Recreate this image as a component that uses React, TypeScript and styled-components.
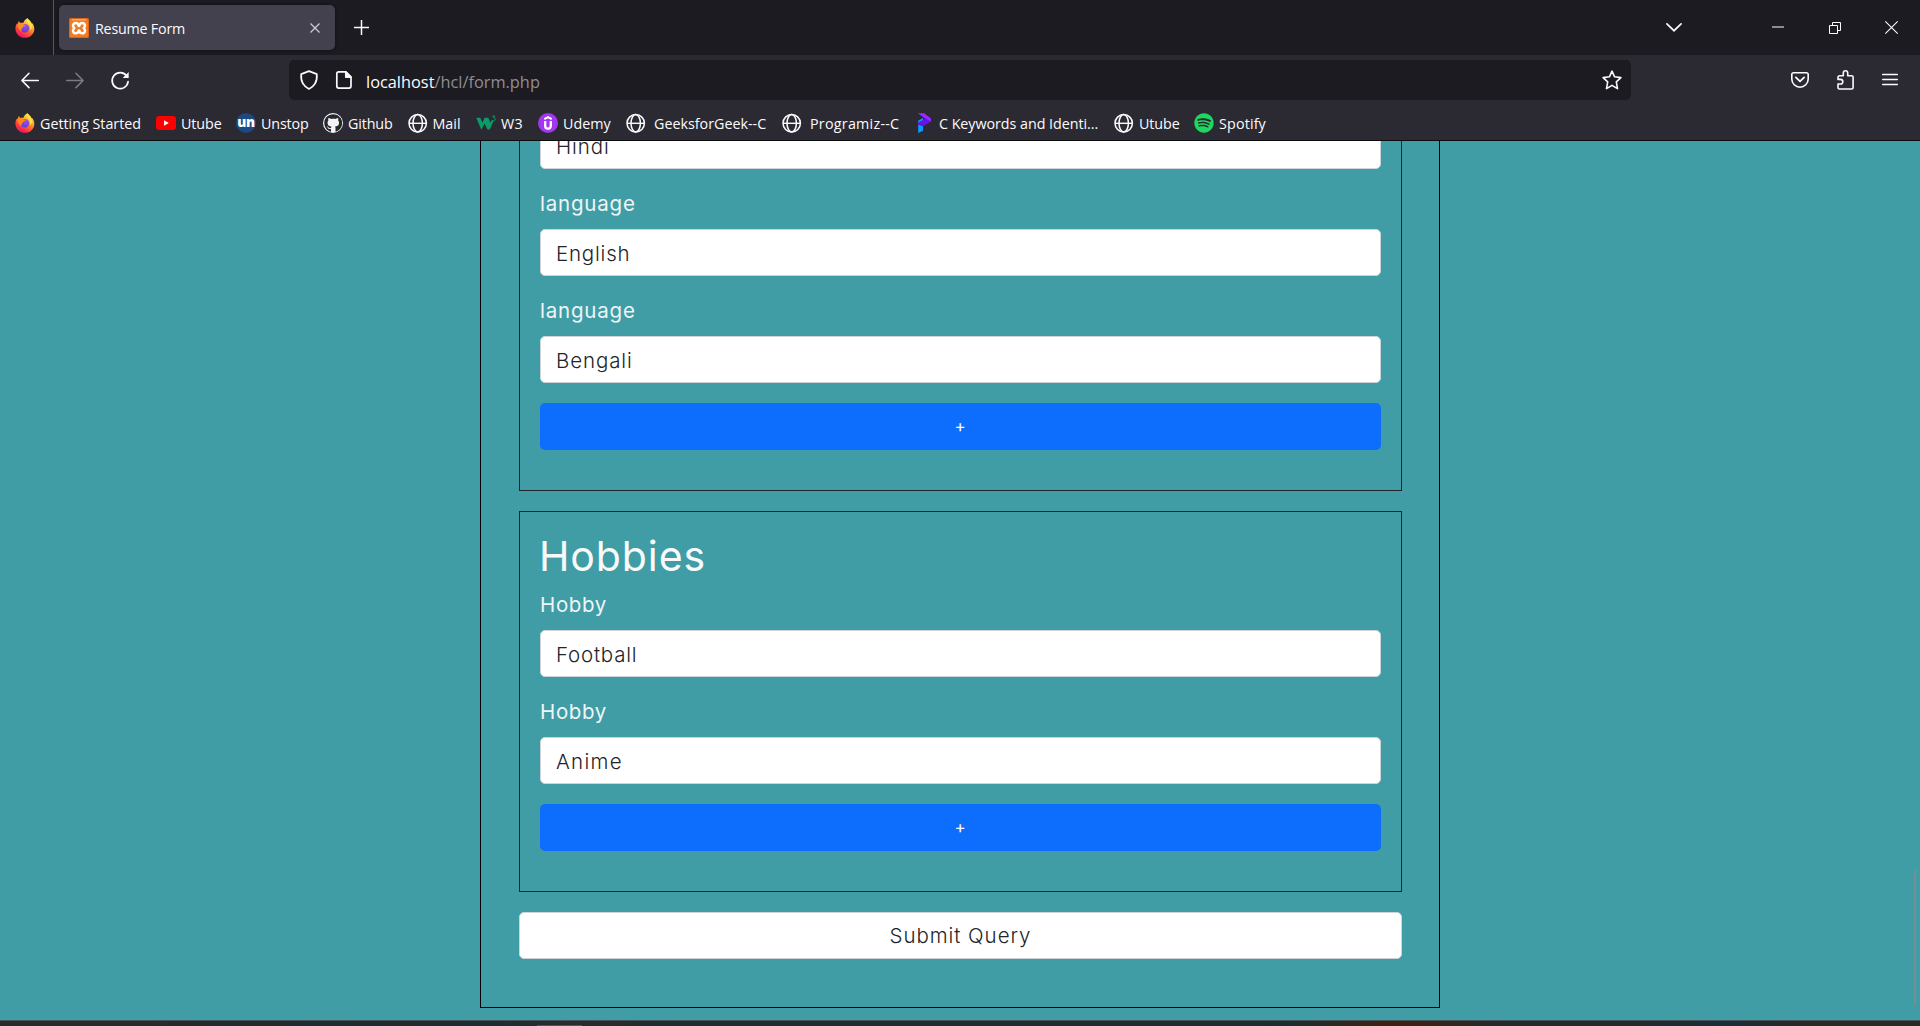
import React from "react";
import styled, { createGlobalStyle } from "styled-components";
import { FaGithub, FaSpotify } from "react-icons/fa";

const GlobalStyle = createGlobalStyle`
  * { box-sizing: border-box; }
  html, body { margin: 0; padding: 0; overflow: hidden; }
  body { background: #1c1b22; }
  button, input { font: inherit; margin: 0; }
`;

const chromeFont = `"Open Sans", "Noto Sans", sans-serif`;
const pageFont = `Inter, "Open Sans", sans-serif`;

/* ---------- window ---------- */

const Window = styled.div`
  display: flex;
  flex-direction: column;
  width: 1920px;
  height: 1026px;
  overflow: hidden;
  font-family: ${chromeFont};
  color: #fbfbfe;
`;

const Icon = styled.svg`
  display: block;
  flex: none;
  overflow: visible;
`;

const IconButton = styled.button<{ $w: number; $dim?: boolean }>`
  display: flex;
  align-items: center;
  justify-content: center;
  flex: none;
  width: ${(p) => p.$w}px;
  height: 40px;
  padding: 0;
  border: 0;
  background: none;
  color: ${(p) => (p.$dim ? "#7b7a81" : "#fbfbfe")};
`;

/* ---------- tab strip ---------- */

const TabStrip = styled.div`
  display: flex;
  align-items: center;
  flex: none;
  height: 55px;
  background: #1c1b22;
`;

const PinnedView = styled.div`
  display: flex;
  align-items: center;
  width: 54px;
  height: 55px;
  padding-left: 15px;
  border-right: 1px solid #58575e;
`;

const Tab = styled.div`
  display: flex;
  align-items: center;
  width: 276px;
  height: 45px;
  margin-left: 5px;
  padding-left: 10px;
  border-radius: 5px;
  background: #42414d;
  box-shadow: 0 0 4px rgba(0, 0, 0, 0.5);
`;

const TabTitle = styled.span`
  flex: 1;
  margin-left: 6px;
  padding-top: 2px;
  font-size: 14.3px;
  letter-spacing: -0.22px;
  line-height: 20px;
  white-space: nowrap;
`;

const WindowControls = styled.div`
  display: flex;
  align-items: center;
  margin-left: auto;
`;

/* ---------- navigation bar ---------- */

const NavBar = styled.div`
  display: flex;
  align-items: center;
  flex: none;
  height: 50px;
  padding-left: 7px;
  background: #2b2a33;
`;

const UrlBar = styled.div`
  display: flex;
  align-items: center;
  width: 1342px;
  height: 40px;
  margin-left: 147px;
  border-radius: 5px;
  background: #1c1b22;
`;

const UrlText = styled.div`
  flex: 1;
  padding: 4px 0 0 7px;
  font-size: 16.35px;
  line-height: 24px;
  white-space: nowrap;
  color: #8f8e94;
`;

const Host = styled.span`
  color: #fbfbfe;
`;

const NavActions = styled.div`
  display: flex;
  align-items: center;
  margin-left: auto;
  padding-right: 9px;
`;

/* ---------- bookmarks ---------- */

const BookmarkBar = styled.div`
  display: flex;
  align-items: center;
  flex: none;
  height: 36px;
  padding: 1px 0 0 15px;
  background: #2b2a33;
  border-bottom: 1px solid #0c0c0d;
`;

const Bookmark = styled.div<{ $w: number; $gap?: number; $track?: number }>`
  display: flex;
  align-items: center;
  flex: none;
  gap: ${(p) => p.$gap ?? 5}px;
  width: ${(p) => p.$w}px;
  font-size: 14.3px;
  letter-spacing: ${(p) => p.$track ?? 0}px;
  line-height: 20px;
  white-space: nowrap;
`;

const BookmarkTitle = styled.span`
  padding-top: 1px;
`;

const Favicon = styled.span<{ $bg?: string; $round?: boolean }>`
  display: flex;
  align-items: center;
  justify-content: center;
  flex: none;
  width: 20px;
  height: 20px;
  border-radius: ${(p) => (p.$round ? "50%" : "0")};
  background: ${(p) => p.$bg ?? "transparent"};
`;

const UnMark = styled.span`
  margin-top: -3px;
  font-family: "Open Sans", sans-serif;
  font-size: 13.5px;
  font-weight: 800;
  letter-spacing: -0.2px;
  color: #fff;
`;

/* ---------- page ---------- */

const Viewport = styled.main`
  position: relative;
  display: flex;
  flex-direction: column;
  justify-content: flex-end;
  align-items: center;
  flex: none;
  height: 879px;
  padding-bottom: 12px;
  overflow: hidden;
  background: #409da5;
  font-family: ${pageFont};
  font-size: 20.5px;
  font-weight: 350;
  line-height: 30px;
`;

const FormPanel = styled.form`
  display: flex;
  flex-direction: column;
  flex: none;
  gap: 20px;
  width: 960px;
  padding: 38px 37px 48px 38px;
  border: 1px solid #000;
`;

const Section = styled.section`
  padding: 20px;
  border: 1px solid #212529;
`;

const Heading = styled.h1`
  margin: 0 0 0 -1px;
  height: 58px;
  font-size: 41px;
  font-weight: 400;
  line-height: 49px;
  letter-spacing: 0.9px;
  color: #f8f9fa;
`;

const Label = styled.label<{ $track: number }>`
  display: block;
  margin: 0 0 10px;
  font-weight: 400;
  letter-spacing: ${(p) => p.$track}px;
  color: #eef5f6;
`;

const Control = styled.input<{ $track: number }>`
  display: block;
  width: 100%;
  height: 47px;
  margin-bottom: 20px;
  padding: 1px 15px 0;
  border: 1px solid #ced4da;
  border-radius: 5px;
  background: #fff;
  color: #212529;
  letter-spacing: ${(p) => p.$track}px;
  outline: 0;
`;

const AddButton = styled.button`
  display: block;
  width: 100%;
  height: 47px;
  margin-bottom: 20px;
  padding: 0 1px 0 0;
  border: 0;
  border-radius: 5px;
  background: #0d6efd;
  color: #fff;
  font-size: 17px;
  font-weight: 400;
  line-height: 47px;
`;

const SubmitButton = styled.button`
  height: 47px;
  padding: 1px 0 0;
  border: 1px solid #ced4da;
  border-radius: 5px;
  background: #fff;
  color: #212529;
  letter-spacing: 0.95px;
`;

const ScrollThumb = styled.div`
  position: absolute;
  right: 4px;
  bottom: 15px;
  width: 2px;
  height: 135px;
  background: #729095;
`;

const TaskbarEdge = styled.div`
  display: flex;
  align-items: flex-end;
  flex: none;
  height: 6px;
  padding-left: 537px;
  border-top: 1px solid #49545a;
  background: linear-gradient(
    90deg,
    #2b2a2a 0%, #2a2a2b 8%, #1f2c30 12%, #232b2d 14%, #192f35 17%, #222c2f 21%,
    #1a2f34 25%, #2a2b2d 31%, #192f33 35%, #192e31 67%, #3c2414 72%, #3a2415 74%,
    #232b2d 78%, #222b2e 85%, #172f39 90%, #2a2928 94%, #2b2927 100%
  );
`;

const RunningMark = styled.div`
  width: 45px;
  height: 1px;
  background: #4b5658;
`;

/* ---------- icons ---------- */

const FirefoxIcon = ({ id }: { id: string }) => (
  <Icon width="20" height="20" viewBox="0 0 20 20">
    <defs>
      <linearGradient id={`${id}-body`} x1="0.8" y1="0.05" x2="0.25" y2="1">
        <stop offset="0" stopColor="#fff44f" />
        <stop offset="0.3" stopColor="#ffb22c" />
        <stop offset="0.58" stopColor="#ff5f30" />
        <stop offset="0.85" stopColor="#f5244f" />
        <stop offset="1" stopColor="#e31587" />
      </linearGradient>
      <radialGradient id={`${id}-core`} cx="0.6" cy="0.25" r="0.8">
        <stop offset="0" stopColor="#a44cf0" />
        <stop offset="1" stopColor="#5b3fd6" />
      </radialGradient>
    </defs>
    <path
      d="M12.6.2c1 1.7 2.6 2.6 3.4 4 .2.4.4.8.5 1.2l.9-.1c1.4 2 2 3.900 1.900 5.900C19.200 16 15.200 19.800 10.100 19.800 4.600 19.800.4 15.700.4 10.700c0-2.300.8-4.300 1.800-5.500l.4 1.100L3.700 3l1.600 2c1-.4 2-.4 3-.1.600-1.700 2-3.900 4.300-4.700z"
      fill={`url(#${id}-body)`}
    />
    <circle cx="9.900" cy="10.200" r="4.200" fill={`url(#${id}-core)`} />
    <path d="M2.600 6.300C4.500 5 7 5.300 8.500 6.300l2 .7c0 1-1.500 1.200-2.100 1.500-.6.500-.3 1.200-1.100 1.700-1.100.6-1.400 1.600-.6 3C4.800 12.800 2.600 9.600 2.600 6.300z" fill="#ff8a1e" />
    <path d="M12.600.2c-1.600 2.600-.8 4.300.9 5.700 1.600 1.400 2.300 3.600 1.300 6.100 2-.9 3.200-3.600 1.200-7.800-.8-1.400-2.400-2.300-3.400-4z" fill="#ffe23f" />
  </Icon>
);

const XamppIcon = () => (
  <Icon width="20" height="20" viewBox="0 0 20 20">
    <rect width="20" height="20" rx="1.500" fill="#d9661a" />
    <rect x="1" y="1" width="18" height="18" rx="1" fill="#f47b20" />
    <path d="M3 1.800h14" stroke="#fbb98a" strokeWidth="1" />
    <path
      d="M10 7.800C9.200 4.200 4 4.200 4 7.600 4 9 5.300 10.200 5.300 10.200S4 11.400 4 12.800c0 3.400 5.200 3.400 6-.2.800 3.600 6 3.600 6 .2 0-1.400-1.300-2.600-1.300-2.600S16 9 16 7.600c0-3.400-5.200-3.400-6 .2z"
      fill="none"
      stroke="#fff"
      strokeWidth="2.500"
      strokeLinejoin="round"
    />
    <path d="M8.600 8h2.800M8.600 12.400h2.800" stroke="#fff" strokeWidth="1.300" />
  </Icon>
);

const YoutubeIcon = () => (
  <Icon width="20" height="20" viewBox="0 0 20 20">
    <rect x="0" y="3" width="20" height="14" rx="3.200" fill="#f00" />
    <path d="M8 7.300l4.800 2.700L8 12.700z" fill="#fff" />
  </Icon>
);

const GlobeIcon = () => (
  <Icon width="20" height="20" viewBox="0 0 20 20" fill="none" stroke="#fbfbfe" strokeWidth="1.500">
    <circle cx="9.700" cy="10.300" r="8.700" />
    <ellipse cx="9.700" cy="10.300" rx="4.700" ry="8.700" />
    <path d="M1 10.300h17.400" strokeWidth="1.400" />
  </Icon>
);

const W3Icon = () => (
  <Icon width="20" height="20" viewBox="0 0 20 20" fill="none">
    <path d="M.3 4.800h4l2.200 5 2.100-5h3.700l2.100 5 .9-2.300h2.400l-4 9h-2.200l-3-6-3 6H5.200z" fill="#0a9d68" />
    <path d="M16.400 3.200h2.600l-1.300 1.700c2.300 0 1.900 3-.1 2.800-.6 0-1-.3-1.200-.7" stroke="#0a9d68" strokeWidth="1" />
  </Icon>
);

const UdemyIcon = () => (
  <Icon width="20" height="20" viewBox="0 0 20 20">
    <circle cx="10" cy="10" r="10" fill="#a435f0" />
    <g fill="none" stroke="#fff">
      <path d="M6.300 6.200L10 4.100l3.700 2.100" strokeWidth="1.900" />
      <path d="M7.200 8v5c0 3.600 5.600 3.600 5.600 0V8" strokeWidth="2.300" />
    </g>
  </Icon>
);

const ProgramizIcon = () => (
  <Icon width="20" height="20" viewBox="0 0 20 20">
    <path d="M4.200 7.800L9 5v12.800L4.200 20z" fill="#0a9bff" />
    <path d="M4 .2h6l6.800 5.400v3L9.300 13.200 4.200 12V9.600L10.800 6z" fill="#6a10ea" />
    <path d="M4 .2h6l6.800 5.400v3.200z" fill="#9b2bff" />
  </Icon>
);

const GithubIcon = () => (
  <Favicon $bg="#f4f4f6" $round>
    <FaGithub size={18.5} color="#24292e" />
  </Favicon>
);

const UnstopIcon = () => (
  <Favicon $bg="#1c4980" $round>
    <UnMark>un</UnMark>
  </Favicon>
);

const bookmarks = [
  { label: "Getting Started", w: 141, icon: <FirefoxIcon id="ff-bm" /> },
  { label: "Utube", w: 80, icon: <YoutubeIcon />, track: -0.1 },
  { label: "Unstop", w: 87, icon: <UnstopIcon />, track: -0.15 },
  { label: "Github", w: 84.5, icon: <GithubIcon />, track: -0.15 },
  { label: "Mail", w: 68.5, icon: <GlobeIcon /> },
  { label: "W3", w: 62, icon: <W3Icon />, track: 0.3 },
  { label: "Udemy", w: 87.5, icon: <UdemyIcon /> },
  { label: "GeeksforGeek--C", w: 156, icon: <GlobeIcon />, gap: 8.5 },
  { label: "Programiz--C", w: 132.5, icon: <GlobeIcon />, gap: 8.5, track: 0.25 },
  { label: "C Keywords and Identi...", w: 200, icon: <ProgramizIcon />, track: -0.04 },
  { label: "Utube", w: 80, icon: <GlobeIcon />, track: -0.1 },
  { label: "Spotify", w: 80, icon: <FaSpotify size={20} color="#1ed760" />, track: 0.15 },
];

interface Field {
  label?: string;
  labelTrack?: number;
  value: string;
  track: number;
}

const languages: Field[] = [
  { value: "Hindi", track: 0.9 },
  { label: "language", labelTrack: 0.8, value: "English", track: 0.8 },
  { label: "language", labelTrack: 0.8, value: "Bengali", track: 0.9 },
];

const hobbies: Field[] = [
  { label: "Hobby", labelTrack: 0.65, value: "Football", track: 0.8 },
  { label: "Hobby", labelTrack: 0.65, value: "Anime", track: 1.3 },
];

const Fields = ({ items }: { items: Field[] }) => (
  <>
    {items.map((f) => (
      <React.Fragment key={f.value}>
        {f.label && <Label $track={f.labelTrack ?? 1}>{f.label}</Label>}
        <Control $track={f.track} defaultValue={f.value} />
      </React.Fragment>
    ))}
    <AddButton type="button">+</AddButton>
  </>
);

export default function App() {
  return (
    <Window>
      <GlobalStyle />
      <TabStrip>
        <PinnedView>
          <FirefoxIcon id="ff-view" />
        </PinnedView>
        <Tab>
          <XamppIcon />
          <TabTitle>Resume Form</TabTitle>
          <IconButton $w={40}>
            <Icon width="10" height="10" viewBox="0 0 10 10" stroke="#cfcfd4" strokeWidth="1.200">
              <path d="M.5.500l9 9M9.500.500l-9 9" />
            </Icon>
          </IconButton>
        </Tab>
        <IconButton $w={53}>
          <Icon width="15" height="15" viewBox="0 0 15 15" stroke="currentColor" strokeWidth="1.500">
            <path d="M7.500 0v15M0 7.500h15" />
          </Icon>
        </IconButton>
        <WindowControls>
          <IconButton $w={148}>
            <Icon width="16" height="9" viewBox="0 0 16 9" fill="none" stroke="currentColor" strokeWidth="1.700">
              <path d="M.9.900L8 7.700l7.100-6.800" strokeLinecap="round" />
            </Icon>
          </IconButton>
          <IconButton $w={60}>
            <Icon width="12" height="12" viewBox="0 0 12 12" stroke="currentColor">
              <path d="M0 5h12" />
            </Icon>
          </IconButton>
          <IconButton $w={54}>
            <Icon width="12" height="12" viewBox="0 0 12 12" fill="none" stroke="currentColor">
              <path d="M.5 3.500h8v8h-8zM3.500 3.500v-3h8v8h-3" />
            </Icon>
          </IconButton>
          <IconButton $w={58}>
            <Icon width="13" height="13" viewBox="0 0 13 13" stroke="currentColor" strokeWidth="1.100">
              <path d="M.3.300l12.400 12.400M12.700.300L.300 12.700" />
            </Icon>
          </IconButton>
        </WindowControls>
      </TabStrip>

      <NavBar>
        <IconButton $w={45}>
          <Icon width="18" height="16" viewBox="0 0 18 16" fill="none" stroke="currentColor" strokeWidth="1.600" strokeLinecap="round" strokeLinejoin="round">
            <path d="M17.300 8.500H1M8 1.300L.9 8.500 8 15.600" />
          </Icon>
        </IconButton>
        <IconButton $w={45} $dim>
          <Icon width="18" height="16" viewBox="0 0 18 16" fill="none" stroke="currentColor" strokeWidth="1.600" strokeLinecap="round" strokeLinejoin="round">
            <path d="M.700 8.500H17M10 1.300l7.100 7.200-7.100 7.100" />
          </Icon>
        </IconButton>
        <IconButton $w={45}>
          <Icon width="18" height="18" viewBox="0 0 18 18" fill="none" stroke="currentColor" strokeWidth="1.700" strokeLinecap="round">
            <path d="M15.800 5.200A8 8 0 1 0 17.100 10.700" />
            <path d="M17.700 1v6h-6z" fill="currentColor" stroke="none" />
          </Icon>
        </IconButton>
        <UrlBar>
          <IconButton $w={40}>
            <Icon width="18" height="20" viewBox="0 0 18 20" fill="none" stroke="currentColor" strokeWidth="1.700" strokeLinejoin="round">
              <path d="M9 1.100l7.800 3c.3 3.200 0 6.600-1.800 9.600-1.300 2.300-3.300 4-6 5.300-2.700-1.300-4.700-3-6-5.300C1.200 10.700.9 7.300 1.200 4.100z" />
            </Icon>
          </IconButton>
          <IconButton $w={30}>
            <Icon width="16" height="18" viewBox="0 0 16 18" fill="none" stroke="currentColor" strokeWidth="1.700" strokeLinejoin="round">
              <path d="M2.800.9h7l5.200 5.200v9a2 2 0 0 1-2 2H2.800a2 2 0 0 1-2-2V2.900a2 2 0 0 1 2-2z" />
              <path d="M9.800.9v5.200H15z" fill="currentColor" />
            </Icon>
          </IconButton>
          <UrlText>
            <Host>localhost</Host>/hcl/form.php
          </UrlText>
          <IconButton $w={38}>
            <Icon width="20" height="20" viewBox="0 0 20 20" fill="none" stroke="currentColor" strokeWidth="1.600" strokeLinejoin="round">
              <path d="M10 1.200l2.600 5.600 6.300.800-4.600 4.300 1.200 6.700L10 15.400l-5.500 3.200 1.200-6.700L1.100 7.600l6.300-.800z" />
            </Icon>
          </IconButton>
        </UrlBar>
        <NavActions>
          <IconButton $w={45}>
            <Icon width="18" height="16" viewBox="0 0 18 16" fill="none" stroke="currentColor" strokeWidth="1.600" strokeLinecap="round" strokeLinejoin="round">
              <path d="M2.500.8h13a1.700 1.700 0 0 1 1.700 1.700V7A8.200 8.200 0 0 1 .8 7V2.500A1.700 1.700 0 0 1 2.500.8z" />
              <path d="M4.900 5.400L9 9.400l4.100-4" strokeWidth="1.800" />
            </Icon>
          </IconButton>
          <IconButton $w={46}>
            <Icon width="17" height="20" viewBox="0 0 17 20" fill="none" stroke="currentColor" strokeWidth="1.600" strokeLinejoin="round">
              <path d="M2.500 5.800h3.800V3a2.200 2.200 0 0 1 4.400 0v2.800h3.900a1.500 1.500 0 0 1 1.500 1.500v10.200a1.500 1.500 0 0 1-1.500 1.500H2.500A1.500 1.500 0 0 1 1 17.500V14h2.500a2.300 2.300 0 0 0 0-4.600H1V7.300a1.500 1.500 0 0 1 1.500-1.500z" />
            </Icon>
          </IconButton>
          <IconButton $w={43}>
            <Icon width="16" height="14" viewBox="0 0 16 14" stroke="currentColor" strokeWidth="1.500" strokeLinecap="round">
              <path d="M.700 1.500h14.600M.700 6.500h14.600M.700 11.500h14.600" />
            </Icon>
          </IconButton>
        </NavActions>
      </NavBar>

      <BookmarkBar>
        {bookmarks.map((b, i) => (
          <Bookmark key={i} $w={b.w} $gap={b.gap} $track={b.track}>
            {b.icon}
            <BookmarkTitle>{b.label}</BookmarkTitle>
          </Bookmark>
        ))}
      </BookmarkBar>

      <Viewport>
        <FormPanel>
          <Section>
            <Fields items={languages} />
          </Section>
          <Section>
            <Heading>Hobbies</Heading>
            <Fields items={hobbies} />
          </Section>
          <SubmitButton type="button">Submit Query</SubmitButton>
        </FormPanel>
        <ScrollThumb />
      </Viewport>
      <TaskbarEdge>
        <RunningMark />
      </TaskbarEdge>
    </Window>
  );
}
